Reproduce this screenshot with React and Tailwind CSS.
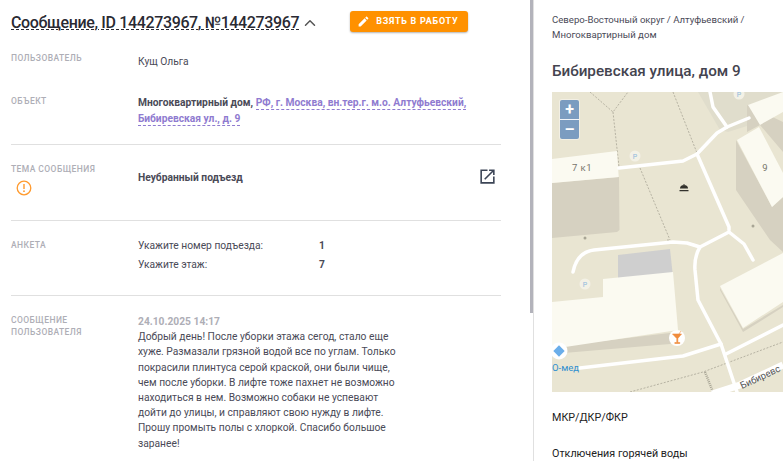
import { ChevronUp } from 'lucide-react';

function Label({ children }) {
  return <div className="w-[127px] shrink-0 text-[8.5px] leading-[12px] font-medium uppercase tracking-[0.05em] text-[#aeaeb6]">{children}</div>;
}

function MapView() {
  return (
    <div className="relative h-[300px] w-[231px] shrink-0 overflow-hidden bg-[#e9e5d2]">
      <svg width="231" height="300" viewBox="0 0 231 300" className="block">
        <polygon points="146,0 231,0 231,20 195,34 176,40 168,38" fill="#e0ddcc" />
        {/* dashed paths */}
        <g fill="none" stroke="#a8a595" strokeWidth="0.8" strokeDasharray="2 1.5">
          <path d="M38 0L61 20L76 0M61 20L67 75M88 76L118 148M121 0L145 61" />
          <path d="M115 148L118 148M78 300L151 280L231 250" />
          <path d="M153 280L161 300" strokeDasharray="1 1" strokeWidth="2.5" />
        </g>
        {/* buildings */}
        <polygon points="0,91 67,85 67.5,138 65,140 0,146" fill="#d6d1c1" />
        <polygon points="0,67 65,59 66.7,85 0,91" fill="#fbfaf1" />
        <polygon points="184,48 184,98 218,148 231,160 231,105 220,115" fill="#d6d1c1" />
        <polygon points="185,48 207,35 231,81 231,105 220,115" fill="#fbfaf1" />
        <polygon points="195,13 195,40 208,33 231,60 231,30" fill="#d6d1c1" />
        <polygon points="196,13 231,0 231,20 208,33" fill="#fbfaf1" />
        <polygon points="66,163 118,157 121,185 66,190" fill="#cfcfcf" />
        <polygon points="0,255 0,262 118,252 126,246 126,240" fill="#d6d1c1" />
        <polygon points="51,187 121,180 126,238 0,257 0,210 51,205" fill="#fbfaf1" />
        <polygon points="168,196 191,237 231,213 231,215 191,240 168,198" fill="#d6d1c1" />
        <polygon points="168,194 231,161 231,210 191,236" fill="#fbfaf1" />
        {/* roads */}
        <g fill="none" stroke="#ffffff" strokeWidth="3.5" strokeLinejoin="round" strokeLinecap="round">
          <path d="M67 76L131 69L145 62L165 41L175 35L197 26" />
          <path d="M158 0L161 15L175 35" />
          <path d="M145 62L177 135L177 138" />
          <path d="M21 180Q25 160 42 158L121 150L135 151L148 155L177 140" />
          <path d="M148 155Q142 165 143 178L146 208L169 252L185 300" />
          <path d="M177 140L192 152L201 168" />
          <path d="M28 276L131 264L169 252" />
          <path d="M174 262L231 233" />
        </g>
        <path d="M160 302L188 293L231 273" fill="none" stroke="#ffffff" strokeWidth="7" />
        {/* pois */}
        <g fontFamily="Roboto, sans-serif" fontSize="7" textAnchor="middle" fill="#8fb8dc">
          <circle cx="83" cy="64" r="5.5" fill="#f3f1e6" /><text x="83" y="66.5">P</text>
          <circle cx="187" cy="2" r="5.5" fill="#f3f1e6" /><text x="187" y="5">P</text>
          <circle cx="33" cy="192" r="5.5" fill="#f3f1e6" /><text x="33" y="194.5">P</text>
        </g>
        <path d="M128 96.500a4 3.500 0 0 1 8 0zM127.500 98h9v1.200h-9zM131.500 92h1v1.500h-1z" fill="#33322c" />
        <circle cx="33" cy="146" r="1.500" fill="#a8a595" />
        <circle cx="201" cy="134" r="1.500" fill="#a8a595" />
        <circle cx="125" cy="246" r="8" fill="#ffffff" />
        <path d="M120.500 242h9l-3.700 4.500v4h2v1h-5v-1h2v-4zM127 242l2-3" fill="#f08c3c" stroke="#f08c3c" strokeWidth="0.6" />
        <circle cx="7" cy="259" r="8.500" fill="#ffffff" />
        <rect x="3" y="255" width="8" height="8" transform="rotate(45 7 259)" fill="#6aaeea" />
        <text x="0" y="279" fontFamily="Roboto, sans-serif" fontSize="9.500" fill="#2f8fd0">О-мед</text>
        <g transform="rotate(-25 190 297)">
          <text x="190" y="297" fontFamily="Roboto, sans-serif" fontSize="9.500" fill="#555">Бибиревс</text>
        </g>
        <text x="30" y="79" fontFamily="Roboto, sans-serif" fontSize="9.500" fill="#77756c" textAnchor="middle" letterSpacing="0.5">7 к1</text>
        <text x="213" y="79" fontFamily="Roboto, sans-serif" fontSize="9.500" fill="#77756c" textAnchor="middle">9</text>
      </svg>
      <div className="absolute left-[7px] top-[7px] rounded-[3px] bg-white/40 p-px">
        <div className="flex h-[20px] w-[19px] items-center justify-center rounded-t-[2px] border-b border-white/90 bg-[#7b9cc0] text-[16px] leading-none font-bold text-white">+</div>
        <div className="flex h-[19px] w-[19px] items-center justify-center rounded-b-[2px] bg-[#7b9cc0] text-[16px] leading-none font-bold text-white">–</div>
      </div>
    </div>
  );
}

export default function App() {
  return (
    <div className="flex h-[461px] w-[783px] overflow-hidden bg-white font-['Roboto',sans-serif] text-[#4a4a57]">
      {/* left column */}
      <div className="relative h-full w-[534px] shrink-0 border-r border-[#e0e0e0] pl-[11px] pr-[32px]">
        <div className="flex h-[46px] items-start pt-[11px]">
          <span className="mt-[2px] whitespace-nowrap text-[16px] leading-[20px] font-medium tracking-[-0.36px] text-[#2a2a33] underline decoration-dashed decoration-1 underline-offset-[1px]">Сообщение, ID 144273967, №144273967</span>
          <ChevronUp className="ml-[2px] mt-[3px] h-[18px] w-[18px] shrink-0 text-[#555]" strokeWidth={2} />
          <button className="ml-[31px] flex h-[21px] w-[118px] shrink-0 items-center gap-[6px] rounded-[3px] bg-[#ff9100] pl-[7px] text-[9px] font-bold tracking-[0.08em] text-white shadow-[0_1px_2px_rgba(0,0,0,0.3)]">
            <svg width="13" height="13" viewBox="0 0 24 24" fill="#ffffff"><path d="M3 17.25V21h3.75L17.81 9.94l-3.75-3.75L3 17.25zM20.71 7.04c.39-.39.39-1.02 0-1.41l-2.34-2.34c-.39-.39-1.02-.39-1.41 0l-1.83 1.83 3.75 3.75 1.83-1.83z" /></svg>
            ВЗЯТЬ В РАБОТУ
          </button>
        </div>

        <div className="flex h-[42px] items-start pt-[6px]">
          <Label>Пользователь</Label>
          <div className="pt-[3px] text-[10.25px] leading-[13px]">Кущ Ольга</div>
        </div>

        <div className="flex h-[57px] items-start border-b border-[#e0e0e0] pt-[7px]">
          <Label>Объект</Label>
          <div className="w-[340px] text-[10.25px] leading-[16px] font-bold">
            <div>
              Многоквартирный дом,{' '}
              <span className="border-b border-dashed border-[#8f7bd0] text-[#8f7bd0]">РФ, г. Москва, вн.тер.г. м.о. Алтуфьевский,</span>
            </div>
            <div>
              <span className="border-b border-dashed border-[#8f7bd0] text-[#8f7bd0]">Бибиревская ул., д. 9</span>
            </div>
          </div>
        </div>

        <div className="flex h-[76px] items-start border-b border-[#e0e0e0] pt-[18px]">
          <div className="w-[127px] shrink-0">
            <Label>Тема сообщения</Label>
            <svg width="16" height="16" viewBox="0 0 16 16" className="ml-[5px] mt-[5px]">
              <circle cx="8" cy="8" r="6.800" fill="none" stroke="#ff9a2e" strokeWidth="1.300" />
              <path d="M8 4v5" stroke="#ff9a2e" strokeWidth="1.400" />
              <circle cx="8" cy="11.200" r="0.900" fill="#ff9a2e" />
            </svg>
          </div>
          <div className="flex-1 pt-[8px] text-[10.25px] leading-[13px] font-bold">Неубранный подъезд</div>
          <svg width="19" height="19" viewBox="0 0 24 24" fill="#3c4556" className="mr-[4px] mt-[4px]">
            <path d="M19 19H5V5h7V3H3v18h18v-9h-2v7zM14 3v2h3.590l-9.830 9.830 1.410 1.410L19 6.410V10h2V3h-7z" />
          </svg>
        </div>

        <div className="flex h-[75px] items-start border-b border-[#e0e0e0] pt-[18px]">
          <Label>Анкета</Label>
          <div className="grid grid-cols-[181px_1fr] gap-y-[6px] text-[10.25px] leading-[13px]">
            <div>Укажите номер подъезда:</div><div className="font-bold">1</div>
            <div>Укажите этаж:</div><div className="font-bold">7</div>
          </div>
        </div>

        <div className="flex items-start pt-[18px]">
          <Label>Сообщение<br />пользователя</Label>
          <div className="w-[262px] text-[10.25px] leading-[15.2px]">
            <div className="font-bold text-[#aeaeb6]">24.10.2025 14:17</div>
            Добрый день! После уборки этажа сегод, стало еще хуже. Размазали грязной водой все по углам. Только покрасили плинтуса серой краской, они были чище, чем после уборки. В лифте тоже пахнет не возможно находиться в нем. Возможно собаки не успевают дойти до улицы, и справляют свою нужду в лифте. Прошу промыть полы с хлоркой. Спасибо большое заранее!
          </div>
        </div>

        <div className="absolute right-0 top-0 h-[313px] w-[3px] bg-[#b3b3bb]" />
      </div>

      {/* right column */}
      <div className="flex min-w-0 flex-1 flex-col pl-[18px]">
        <div className="pt-[12px] text-[9.6px] leading-[15px]">Северо-Восточный округ / Алтуфьевский /<br />Многоквартирный дом</div>
        <div className="mt-[20px] text-[15.25px] leading-[18px] font-medium text-[#44444f]">Бибиревская улица, дом 9</div>
        <div className="mt-[12px]"><MapView /></div>
        <div className="mt-[19px] text-[10.75px] leading-[14px] text-[#222]">МКР/ДКР/ФКР</div>
        <div className="mt-[22px] text-[10.75px] leading-[14px] text-[#222]">Отключения горячей воды</div>
      </div>
    </div>
  );
}
